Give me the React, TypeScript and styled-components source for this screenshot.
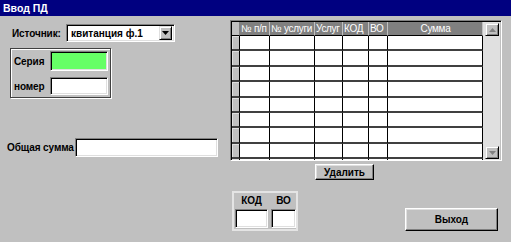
import { Fragment } from 'react';
import styled, { createGlobalStyle } from 'styled-components';

const GlobalStyle = createGlobalStyle`
  html, body {
    margin: 0;
    padding: 0;
    background: #c0c0c0;
  }
  body {
    font-family: "Liberation Sans", Arial, sans-serif;
    font-size: 10px;
    color: #000;
  }
`;

const Window = styled.div`
  width: 511px;
  height: 242px;
  background: #c0c0c0;
  display: flex;
  flex-direction: column;
  overflow: hidden;
`;

const TitleBar = styled.div`
  height: 16px;
  background: #000080;
  color: #fff;
  font-weight: 700;
  font-size: 10.5px;
  line-height: 16px;
  padding-left: 3px;
`;

const Body = styled.div`
  display: flex;
  flex: 1;
`;

const LeftCol = styled.div`
  width: 230px;
  display: flex;
  flex-direction: column;
  padding-top: 8px;
`;

const RightCol = styled.div`
  flex: 1;
  display: flex;
  flex-direction: column;
  padding-top: 4px;
`;

const Label = styled.span`
  font-weight: 700;
  font-size: 10px;
  white-space: nowrap;
  letter-spacing: -0.1px;
`;

/* sunken edit field */
const Field = styled.div<{ $w: number; $h: number; $bg?: string }>`
  box-sizing: border-box;
  width: ${({ $w }) => $w}px;
  height: ${({ $h }) => $h}px;
  background: ${({ $bg }) => $bg ?? '#fff'};
  border: 1px solid;
  border-color: #808080 #fff #fff #808080;
  box-shadow: inset 1px 1px 0 #000, inset -1px -1px 0 #dfdfdf;
`;

const SourceRow = styled.div`
  display: grid;
  grid-template-columns: 54px 109px;
  align-items: center;
  margin-left: 12px;
  height: 18px;
`;

const Select = styled(Field)`
  display: flex;
  align-items: center;
  justify-content: space-between;
  padding: 2px;
`;

const SelectText = styled.span`
  padding-left: 2px;
  font-weight: 700;
  font-size: 10px;
`;

const DropButton = styled.div`
  box-sizing: border-box;
  width: 13px;
  height: 14px;
  background: #c0c0c0;
  border: 1px solid;
  border-color: #dfdfdf #000 #000 #dfdfdf;
  box-shadow: inset 1px 1px 0 #fff, inset -1px -1px 0 #808080;
  display: flex;
  align-items: center;
  justify-content: center;
`;

const GroupBox = styled.div`
  box-sizing: border-box;
  margin: 6px 0 0 10px;
  width: 101px;
  height: 50px;
  border: 1px solid #404040;
  box-shadow: inset 1px 1px 0 #fff, 1px 1px 0 #fff;
  display: grid;
  grid-template-columns: 36px 58px;
  align-items: center;
  row-gap: 6px;
  padding: 2px 0 0 3px;
  align-content: start;
`;

const TotalRow = styled.div`
  display: grid;
  grid-template-columns: 68px 143px;
  align-items: center;
  margin: 40px 0 0 7px;
`;

const Grid = styled.div`
  box-sizing: border-box;
  width: 272px;
  height: 141px;
  border: 1px solid;
  border-color: #808080 #fff #fff #808080;
  box-shadow: inset 1px 1px 0 #000;
  padding: 1px 0 0 1px;
  display: flex;
  overflow: hidden;
`;

const Cells = styled.div`
  display: grid;
  grid-template-columns: 8px 30px 45px 28px 26px 19px 95px;
  grid-template-rows: 14px;
  grid-auto-rows: 15.375px;
  background: #fff;
  align-content: start;
`;

const HeadCell = styled.div<{ $center?: boolean }>`
  box-sizing: border-box;
  background: #808080;
  color: #fff;
  font-size: 10px;
  letter-spacing: -0.3px;
  line-height: 13px;
  padding-left: 1px;
  white-space: nowrap;
  overflow: hidden;
  text-align: ${({ $center }) => ($center ? 'center' : 'left')};
  border-right: 1px solid #c0c0c0;
  border-bottom: 1px solid #000;
`;

const Corner = styled.div`
  box-sizing: border-box;
  background: #c0c0c0;
  border-bottom: 1px solid #000;
  border-right: 1px solid #808080;
`;

const RowHead = styled.div`
  box-sizing: border-box;
  background: #c0c0c0;
  box-shadow: inset 1px 1px 0 #dfdfdf;
  border-right: 1px solid #000;
  border-bottom: 2px solid #404040;
`;

const Cell = styled.div`
  box-sizing: border-box;
  border-right: 1px solid #000;
  border-bottom: 2px solid #404040;
`;

const ScrollBar = styled.div`
  width: 17px;
  display: flex;
  flex-direction: column;
  background: #e0e0e0;
  padding: 1px 1px 1px 2px;
  box-sizing: border-box;
`;

const ScrollButton = styled.div`
  box-sizing: border-box;
  width: 14px;
  height: 13px;
  background: #c0c0c0;
  border: 1px solid;
  border-color: #dfdfdf #000 #000 #dfdfdf;
  box-shadow: inset 1px 1px 0 #fff, inset -1px -1px 0 #808080;
  display: flex;
  align-items: center;
  justify-content: center;
`;

const Track = styled.div`
  flex: 1;
`;

const Button = styled.button<{ $w: number; $h: number }>`
  box-sizing: border-box;
  width: ${({ $w }) => $w}px;
  height: ${({ $h }) => $h}px;
  background: #c0c0c0;
  border: 1px solid;
  border-color: #fff #000 #000 #fff;
  box-shadow: inset -1px -1px 0 #808080, inset 1px 1px 0 #dfdfdf;
  font-family: "Liberation Sans", Arial, sans-serif;
  font-weight: 700;
  font-size: 10px;
  color: #000;
  padding: 0;
`;

const DeleteButton = styled(Button)`
  margin: 3px 0 0 85px;
`;

const BottomRow = styled.div`
  display: flex;
  align-items: flex-end;
  margin-top: 11px;
`;

const CodeGroup = styled.div`
  box-sizing: border-box;
  margin-left: 2px;
  width: 66px;
  height: 40px;
  border: 2px solid #e4e4e4;
  display: grid;
  grid-template-columns: 33px 25px;
  column-gap: 3px;
  padding: 1px 0 0 1px;
  align-content: start;
`;

const CodeLabel = styled(Label)`
  text-align: center;
  line-height: 14px;
  height: 15px;
`;

const ExitButton = styled(Button)`
  margin-left: 107px;
`;

const Arrow = ({ down, color }: { down?: boolean; color: string }) => (
  <svg width="7" height="4" viewBox="0 0 7 4">
    <polygon points={down ? '0,0 7,0 3.5,4' : '0,4 7,4 3.5,0'} fill={color} />
  </svg>
);

const headers = ['№ п/п', '№ услуги', 'Услуг', 'КОД', 'ВО'];

export default function App() {
  const rows = Array.from({ length: 9 });

  return (
    <>
      <GlobalStyle />
      <Window>
        <TitleBar>Ввод ПД</TitleBar>
        <Body>
          <LeftCol>
            <SourceRow>
              <Label>Источник:</Label>
              <Select $w={109} $h={18}>
                <SelectText>квитанция ф.1</SelectText>
                <DropButton>
                  <Arrow down color="#000" />
                </DropButton>
              </Select>
            </SourceRow>
            <GroupBox>
              <Label>Серия</Label>
              <Field $w={58} $h={20} $bg="#66ff66" />
              <Label>номер</Label>
              <Field $w={58} $h={18} />
            </GroupBox>
            <TotalRow>
              <Label>Общая сумма</Label>
              <Field $w={143} $h={19} />
            </TotalRow>
          </LeftCol>
          <RightCol>
            <Grid>
              <Cells>
                <Corner />
                {headers.map((h) => (
                  <HeadCell key={h}>{h}</HeadCell>
                ))}
                <HeadCell $center>Сумма</HeadCell>
                {rows.map((_, i) => (
                  <Fragment key={i}>
                    <RowHead />
                    {Array.from({ length: 6 }).map((__, j) => (
                      <Cell key={j} />
                    ))}
                  </Fragment>
                ))}
              </Cells>
              <ScrollBar>
                <ScrollButton>
                  <Arrow color="#808080" />
                </ScrollButton>
                <Track />
                <ScrollButton>
                  <Arrow down color="#808080" />
                </ScrollButton>
              </ScrollBar>
            </Grid>
            <DeleteButton $w={59} $h={16}>Удалить</DeleteButton>
            <BottomRow>
              <CodeGroup>
                <CodeLabel>КОД</CodeLabel>
                <CodeLabel>ВО</CodeLabel>
                <Field $w={33} $h={19} />
                <Field $w={25} $h={19} />
              </CodeGroup>
              <ExitButton $w={93} $h={23}>Выход</ExitButton>
            </BottomRow>
          </RightCol>
        </Body>
      </Window>
    </>
  );
}
